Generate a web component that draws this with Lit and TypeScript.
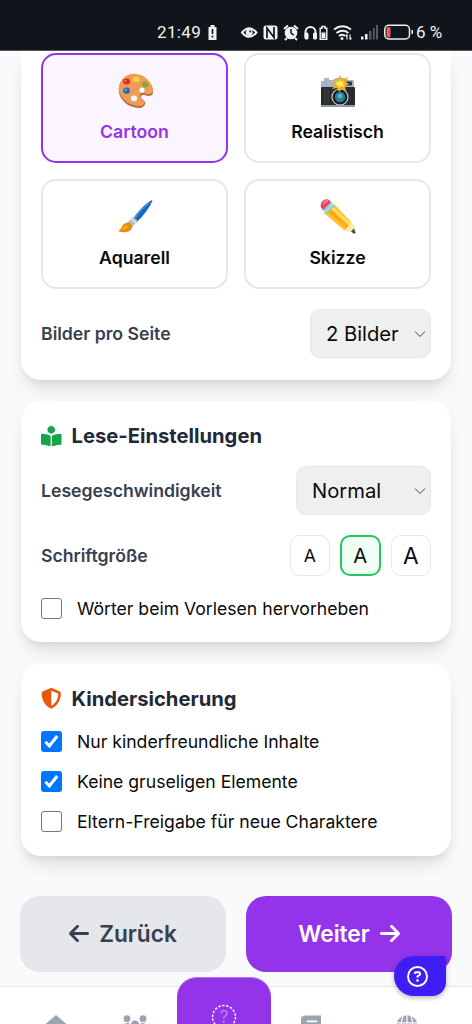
import { LitElement, html, svg, css } from "lit";
import { customElement, property } from "lit/decorators.js";
import { classMap } from "lit/directives/class-map.js";

const palette = svg`
  <path d="M9 4C3 8 0 16 3 23c3 7 11 12 19 12 4 0 7-3 6-6-1-2-4-3-4-5 0-3 4-2 7-1 3 0 5-1 5-4C36 8 22-2 9 4Z" fill="#b96f3b"/>
  <path d="M9 3C3 7 0 14 3 21c3 7 11 12 19 12 4 0 6-2 5-5-1-2-4-3-4-6 0-3 4-2 7-1 3 1 6-1 6-4C35 7 22-4 9 3Z" fill="#ee9b57"/>
  <circle cx="25" cy="17" r="2.6" fill="#fff"/>
  <ellipse cx="9.6" cy="8.6" rx="3.6" ry="3" fill="#dd2c25"/>
  <ellipse cx="19.3" cy="6.2" rx="3.2" ry="2.8" fill="#f9d53a"/>
  <ellipse cx="28" cy="11.6" rx="3.2" ry="2.8" fill="#80ad35"/>
  <ellipse cx="9.6" cy="17.7" rx="3.4" ry="3.1" fill="#1d6fc3"/>
  <ellipse cx="17" cy="25.4" rx="3.2" ry="2.8" fill="#f4f5f7"/>
  <circle cx="8.5" cy="7.8" r="1" fill="#f78378"/><circle cx="8.7" cy="16.8" r="1" fill="#72b5ea"/>`;

const camera = svg`
  <path d="M1 8h3V5h5v2h4l3-2h9l3 2h5c1 0 1 1 1 2v6H1Z" fill="#a3b7c2"/>
  <rect x="1" y="14" width="34" height="19" rx="1" fill="#2b2b2c"/>
  <rect x="1" y="32" width="34" height="2" fill="#8c9ba3"/>
  <rect x="26" y="8.500" width="6" height="4" fill="#263c49"/>
  <path d="M5 16v15M8 16v15" stroke="#454545"/>
  <circle cx="20" cy="24" r="8.600" fill="#c4cdd1"/><circle cx="20" cy="24" r="7.400" fill="#131b20"/>
  <circle cx="20" cy="24" r="5.200" fill="#287e96"/><circle cx="20" cy="23" r="2.500" fill="#4fb1c3"/>
  <path d="m20 2 2 5 6-3-2 5 3 2-4 2 1 5-4-2-3 3-2-4-5 1 3-4-4-4 5 1Z" fill="#f9a825"/>
  <path d="m20 6 1 3 3-1-1 3 1 3-3-1-2 2-1-3-3 0 2-2-1-2 3 1Z" fill="#ffee58"/>`;

const brush = svg`
  <path d="M35.500 1C31 2 20 13 16 20l4 3C26 17 34 7 35.500 1Z" fill="#1766bd"/>
  <path d="M33 3C28 7 21 14 18 19" stroke="#4696e3" stroke-width="1.500" fill="none"/>
  <path d="m16 18 5 4-6 6-5-4Z" fill="#b6bdc2"/><path d="m15 20 4 4" stroke="#edf0f1" stroke-width="1.500"/>
  <path d="M7 25c4-3 9 0 8 4-2 5-9 5-14 3 4-2 3-5 6-7Z" fill="#e88b08"/>
  <path d="M8 26c-2 1-2 3-4 5 4 0 6-1 7-4" fill="#f7a51e"/>`;

const pencil = svg`
  <path d="m9 9-5 5 20 17 8 2c2 1 3 0 3-2l-3-7L14 5Z" fill="#fbc02d"/>
  <path d="m7 12 20 18 3-1L10 9Z" fill="#ffa713"/><path d="m11 8 20 18" stroke="#ffe060" stroke-width="3"/>
  <path d="m25 31 7-8 3 9c0 1-1 2-2 2Z" fill="#ffe8b0"/><path d="m31 32.500 3-3 1.500 4c0 1-1 1.500-2 1Z" fill="#424b50"/>
  <path d="M2 10 10 2l5 5-9 8Z" fill="#8ecfda"/><path d="m5 13 8-8" stroke="#c4edf0" stroke-width="1"/>
  <path d="M1 5c0-3 5-6 8-4l2 2-8 8C1 9 0 7 1 5Z" fill="#e4475b"/><path d="M3 5c1-2 3-3 5-3" stroke="#fb8190" stroke-width="2" fill="none"/>`;

const reader = svg`<path d="M352 96c0-53-43-96-96-96s-96 43-96 96 43 96 96 96 96-43 96-96zM233.600 241.100c-59.300-36.300-155.400-46.300-203.800-49C13.500 191.100 0 203.500 0 219.100v222.800c0 14.300 11.600 26.300 26.500 27 43.700 2.300 132 10.700 193 41.500 9.400 4.700 20.500-1.700 20.500-11.900V252.600c0-4.700-2.300-9-6.400-11.500zm248.600-49c-48.400 2.700-144.500 12.700-203.800 49-4.100 2.500-6.400 7-6.400 11.600v245.800c0 10.200 11.100 16.600 20.500 11.900 61-30.700 149.300-39.100 193-41.400 14.900-.8 26.500-12.700 26.500-27V219.100c0-15.600-13.600-28-29.800-27z"/>`;
const shield = svg`<path d="M256 0c4.600 0 9.200 1 13.400 2.900l188.300 79.900c22 9.300 38.400 31 38.300 57.200-.5 99.200-41.300 280.700-213.600 363.200-16.700 8-36.100 8-52.800 0C57.300 420.700 16.500 239.200 16 140c-.1-26.200 16.300-47.900 38.300-57.200L242.700 2.900C246.800 1 251.400 0 256 0zm0 66.800v378.100C394 378 431.100 230.100 432 141.400L256 66.800z"/>`;
const arrow = svg`<path d="M9.400 233.400c-12.500 12.500-12.500 32.800 0 45.300l160 160c12.500 12.500 32.800 12.500 45.300 0s12.500-32.800 0-45.300L109.200 288H416c17.700 0 32-14.300 32-32s-14.300-32-32-32H109.300L214.600 118.600c12.500-12.500 12.500-32.800 0-45.300s-32.800-12.500-45.300 0l-160 160z"/>`;
const question = svg`<path d="M464 256A208 208 0 1 0 48 256a208 208 0 1 0 416 0zM0 256a256 256 0 1 1 512 0A256 256 0 1 1 0 256zm169.800-90.700c7.900-22.300 29.100-37.300 52.800-37.300h58.300c34.900 0 63.100 28.300 63.100 63.100 0 22.600-12.100 43.500-31.700 54.800L280 264.400c-.2 13-10.900 23.600-24 23.600-13.300 0-24-10.700-24-24v-13.500c0-8.600 4.600-16.500 12.100-20.800l44.300-25.400c4.700-2.700 7.600-7.700 7.600-13.100 0-8.400-6.800-15.100-15.100-15.100h-58.300c-3.400 0-6.400 2.100-7.500 5.300l-.4 1.200c-4.400 12.500-18.200 19-30.700 14.600s-19-18.200-14.600-30.700l.4-1.200zM224 352a32 32 0 1 1 64 0 32 32 0 1 1-64 0z"/>`;

@customElement("status-bar")
class StatusBar extends LitElement {
  static styles = css`
    :host { display: block; flex: none; }
    .bar { box-sizing: border-box; height: 51px; background: #10141b; color: #f1f1f1; border-bottom: 1px solid #55545b; padding: 22px 0 0 157px; }
    .row { display: flex; align-items: center; height: 20px; font: 400 17px/20px Roboto, sans-serif; }
    .time { width: 50px; flex: none; letter-spacing: .35px; }
    .glyphs { width: 209px; height: 20px; flex: none; }
    .pct { white-space: nowrap; }
  `;
  render() {
    return html`<div class="bar"><div class="row"><span class="time">21:49</span>
      <svg class="glyphs" viewBox="207 22 209 20" fill="#f1f1f1">
        <path d="M210.500 25h4v2h2v13h-8V27h2Z"/><path d="M212.500 29v5m0 1.500v2" stroke="#10141b" stroke-width="1.600"/>
        <path d="M242 32.500q7-8.600 14.500 0-7.500 8.600-14.500 0Z" fill="none" stroke="#f1f1f1" stroke-width="2"/>
        <circle cx="249.200" cy="32.500" r="3.400"/><circle cx="250.200" cy="31.500" r="1" fill="#10141b"/>
        <rect x="263.500" y="25.500" width="14" height="14" rx="2.500"/>
        <path d="M267 38V28l7 9.500V27" fill="none" stroke="#10141b" stroke-width="1.700"/>
        <circle cx="291" cy="33" r="6.300"/><path d="m284 29 4-3.500m10 3.500-4-3.500M287 38l-2 2m10-2 2 2" stroke="#f1f1f1" stroke-width="2"/>
        <path d="M291 29v4l2.800 2.200" fill="none" stroke="#10141b" stroke-width="1.500"/>
        <path d="M305.500 37v-5a5 5 0 0 1 10 0v5" fill="none" stroke="#f1f1f1" stroke-width="2"/>
        <rect x="304.500" y="32.500" width="4" height="7" rx="1.500"/><rect x="313" y="32.500" width="4" height="7" rx="1.500"/>
        <path d="M322 26.500h3v1.700h1.800v11h-6.600v-11h1.800Z" fill="none" stroke="#f1f1f1" stroke-width="1.400"/><rect x="321.500" y="32.500" width="4" height="5.500"/>
        <g fill="none" stroke="#f1f1f1" stroke-width="2"><path d="M334 29.500q8.500-6.500 17 0"/><path d="M336.500 33q6-4.500 12 0"/><path d="M339 36q3.500-2.500 6 0"/></g>
        <circle cx="342" cy="38.500" r="1.500"/><path d="M347 34.500v5m3-5v5m-4.500-3.500 1.500-1.500m3 5 1.500-1.500" stroke="#f1f1f1" stroke-width="1.200" fill="none"/>
        <rect x="361" y="36.500" width="2.500" height="3"/><rect x="365" y="34" width="2.500" height="5.500"/>
        <g fill="#555960"><rect x="369" y="31" width="2.500" height="8.500"/><rect x="373" y="28" width="1.800" height="11.500"/><rect x="376" y="25" width="2" height="14.500"/></g>
        <rect x="384.800" y="25.300" width="24.700" height="13.700" rx="4" fill="none" stroke="#f1f1f1" stroke-width="1.500"/>
        <rect x="386.500" y="27" width="4" height="10.500" rx="1.500" fill="#e06464"/><rect x="411.500" y="30" width="1.500" height="4"/>
      </svg><span class="pct">6 %</span></div></div>`;
  }
}

@customElement("check-row")
class CheckRow extends LitElement {
  @property({ type: Boolean }) on = false;
  @property() label = "";
  static styles = css`
    :host { display: flex; align-items: center; gap: 15px; height: 25px; font-size: 17.620px; line-height: 25px; color: #0a0a0a; white-space: nowrap; }
    .box { width: 21px; height: 21px; box-sizing: border-box; border: 1.300px solid #767676; border-radius: 3px; background: #fff; }
    .on { border: 0; background: #0075ff; }
    svg { display: block; width: 21px; height: 21px; }
  `;
  render() {
    return html`<span class=${classMap({ box: true, on: this.on })}>${this.on
      ? html`<svg viewBox="0 0 21 21"><path d="m4.400 10.800 4 4.200 7.800-10" fill="none" stroke="#fff" stroke-width="3.100"/></svg>` : ""}</span><span>${this.label}</span>`;
  }
}

@customElement("app-root")
class AppRoot extends LitElement {
  static styles = css`
    :host { display: flex; flex-direction: column; position: relative; width: 100%; height: 1024px; overflow: hidden; background: #f9fafb; font-family: Inter, sans-serif; color: #0a0a0a; }
    * { box-sizing: border-box; }
    svg { display: block; flex: none; }
    main { display: flex; flex-direction: column; gap: 21.500px; padding: 0 21px; height: 805px; flex: none; overflow: visible; }
    .card { background: #fff; border-radius: 20px; padding: 20px; flex: none; box-shadow: 0 12px 18px -3px rgba(0,0,0,.1), 0 5px 8px -4px rgba(0,0,0,.1); }
    .styles { height: 328.500px; padding-top: 2px; border-radius: 0 0 20px 20px; }
    .reading { height: 241px; }
    .safety { height: 192px; }
    .grid { display: grid; grid-template-columns: 1fr 1fr; gap: 16px; }
    .option { height: 110px; border: 2.500px solid #e5e7eb; border-radius: 15px; display: flex; flex-direction: column; align-items: center; padding-top: 18px; font-size: 17.650px; line-height: 25px; font-weight: 560; }
    .option svg { width: 36px; height: 36px; margin-bottom: 10px; }
    .option.active { border-color: #9333ea; background: #faf5ff; color: #9333ea; }
    .row { display: flex; align-items: center; justify-content: space-between; font-weight: 560; font-size: 17.650px; color: #374151; }
    .styles .row { margin-top: 20px; }
    .select { display: flex; align-items: center; justify-content: space-between; height: 49px; padding: 0 4px 0 15px; background: #efefef; border: 1.300px solid #e5e7eb; border-radius: 10px; color: #0a0a0a; font-weight: 400; font-size: 20.200px; }
    .select svg { width: 12px; height: 8px; }
    .images { width: 121px; }
    .speed { width: 135px; }
    h2 { display: flex; align-items: center; gap: 10px; margin: 0; height: 30px; font-size: 20.200px; line-height: 30px; font-weight: 660; color: #1f2937; }
    h2 svg { width: 20.500px; height: 20.500px; }
    .green { fill: #16a34a; } .orange { fill: #ea580c; }
    .reading .row { margin-top: 15px; }
    .reading .sizes-row { margin-top: 20px; }
    .sizes { display: flex; gap: 10px; color: #0a0a0a; font-weight: 400; }
    .size { width: 40.500px; height: 40.500px; display: grid; place-items: center; border: 1.300px solid #e5e7eb; border-radius: 10px; }
    .small { font-size: 17.600px; } .mid { font-size: 20.200px; } .large { font-size: 22.700px; }
    .size.chosen { border: 2.500px solid #22c55e; background: #f0fdf4; }
    .reading check-row { margin-top: 20px; }
    .checks { display: flex; flex-direction: column; gap: 15.250px; margin-top: 15px; }
    .actions { display: grid; grid-template-columns: 1fr 1fr; gap: 20px; padding: 40px 20px 0; height: 129.500px; flex: none; }
    .action { height: 75.500px; display: flex; align-items: center; justify-content: center; gap: 10px; border-radius: 20px; font-size: 22.700px; font-weight: 600; background: #e5e7eb; color: #374151; }
    .action svg { width: 20px; height: 23px; fill: currentColor; }
    .next { background: #9333ea; color: #fff; } .next svg { transform: scaleX(-1); }
    .help { position: absolute; left: 394px; top: 956px; width: 52px; height: 40px; display: grid; place-items: center; padding-right: 6px; border-radius: 20px 3px 14px 20px; background: #3f1df5; box-shadow: 0 2px 5px rgba(0,0,0,.28); z-index: 2; }
    .help svg { width: 21px; height: 21px; fill: #fff; }
    nav { display: grid; grid-template-columns: 1fr 1fr; flex: none; height: 38.500px; border-top: 1.500px solid #e5e7eb; background: #fff; }
    .tabs { display: flex; padding-top: 28px; fill: #9ca3af; }
    .tabs.left { padding-left: 45px; gap: 56px; }
    .tabs.right { padding-left: 65px; gap: 73px; }
    .tabs svg { width: 22px; height: 22px; }
    .tabs.left svg + svg { width: 24px; }
    .center { position: absolute; left: 177px; top: 976.500px; width: 94px; height: 80px; border-radius: 20px 20px 0 0; background: #9333ea; border-top: 1px solid #b477ee; display: grid; justify-items: center; padding-top: 25px; }
    .center svg { width: 28px; height: 28px; }
    .mark { font: 400 17px/17px Inter, sans-serif; fill: #be80f5; }
  `;
  option(icon: unknown, label: string, active = false) {
    return html`<div class=${classMap({ option: true, active })}><svg viewBox="0 0 36 36">${icon}</svg><span>${label}</span></div>`;
  }
  select(value: string, kind: string) {
    return html`<div class="select ${kind}"><span>${value}</span><svg viewBox="0 0 12 8"><path d="m1 1.500 5 5 5-5" fill="none" stroke="#333" stroke-width=".9"/></svg></div>`;
  }
  render() {
    return html`
      <status-bar></status-bar>
      <main>
        <section class="card styles">
          <div class="grid">
            ${this.option(palette, "Cartoon", true)}${this.option(camera, "Realistisch")}
            ${this.option(brush, "Aquarell")}${this.option(pencil, "Skizze")}
          </div>
          <div class="row"><span>Bilder pro Seite</span>${this.select("2 Bilder", "images")}</div>
        </section>
        <section class="card reading">
          <h2><svg class="green" viewBox="0 0 512 512">${reader}</svg>Lese-Einstellungen</h2>
          <div class="row"><span>Lesegeschwindigkeit</span>${this.select("Normal", "speed")}</div>
          <div class="row sizes-row"><span>Schriftgröße</span><div class="sizes">
            <span class="size small">A</span><span class="size mid chosen">A</span><span class="size large">A</span>
          </div></div>
          <check-row label="Wörter beim Vorlesen hervorheben"></check-row>
        </section>
        <section class="card safety">
          <h2><svg class="orange" viewBox="0 0 512 512">${shield}</svg>Kindersicherung</h2>
          <div class="checks">
            <check-row on label="Nur kinderfreundliche Inhalte"></check-row>
            <check-row on label="Keine gruseligen Elemente"></check-row>
            <check-row label="Eltern-Freigabe für neue Charaktere"></check-row>
          </div>
        </section>
      </main>
      <div class="actions">
        <div class="action"><svg viewBox="0 0 448 512">${arrow}</svg>Zurück</div>
        <div class="action next">Weiter<svg viewBox="0 0 448 512">${arrow}</svg></div>
      </div>
      <nav>
        <div class="tabs left">
          <svg viewBox="0 0 22 22"><path d="m11 0 11 9.500v2h-2V22h-6v-7H8v7H2V11.500H0v-2Z"/></svg>
          <svg viewBox="0 0 24 22"><circle cx="4" cy="3.700" r="3.400"/><circle cx="20" cy="3.700" r="3.400"/><circle cx="12" cy="9.500" r="4"/><path d="M0 13c0-4 2-5 6-5l1 5Zm24 0c0-4-2-5-6-5l-1 5ZM5 21c0-5 2-7 7-7s7 2 7 7Z"/></svg>
        </div>
        <div class="tabs right">
          <svg viewBox="0 0 22 22"><path fill-rule="evenodd" d="M4 .5h16V17h-1v3h1v2H4q-4 0-4-4V4.500Q0 .5 4 .5Zm2 5v1.700h10V5.500Zm0 3.500v1.500h10V9Z"/></svg>
          <svg viewBox="0 0 22 22"><circle cx="11" cy="11" r="10.700"/><path d="M11 0v22M7.500 0C4 7 5 17 8 22M14.500 0C18 7 17 17 14 22M0 7.800h22M0 14.500h22" fill="none" stroke="#fff" stroke-width="1.200"/></svg>
        </div>
      </nav>
      <div class="center"><svg viewBox="0 0 28 28"><circle cx="14" cy="14" r="11.500" fill="none" stroke="#fff" stroke-width="1.400" stroke-dasharray="2.400 1.600"/><text class="mark" x="14" y="19.500" text-anchor="middle">?</text></svg></div>
      <div class="help"><svg viewBox="0 0 512 512">${question}</svg></div>
    `;
  }
}
